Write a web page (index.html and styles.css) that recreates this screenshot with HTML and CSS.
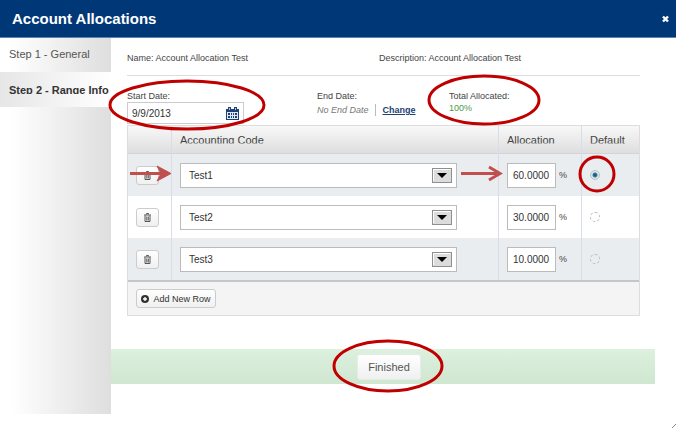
FILE: index.html
```html
<!DOCTYPE html>
<html lang="en">
<head>
    <meta charset="UTF-8">
    <meta name="viewport" content="width=device-width, initial-scale=1.0">
    <title>Account Allocations</title>
    <link rel="stylesheet" href="styles.css">
</head>
<body>
    <header class="titlebar">
        <h1>Account Allocations</h1>
        <button class="close" type="button" aria-label="Close">
            <svg width="7" height="8" viewBox="0 0 7 8"><path d="M1 1.5l5 5M6 1.5l-5 5" stroke="#fff" stroke-width="2.4"/></svg>
        </button>
    </header>

    <div class="layout">
        <nav class="steps">
            <a href="#general">Step 1 - General</a>
            <a href="#range" class="active"><span>Step 2 - Range Info</span></a>
        </nav>

        <main>
            <div class="content">
                <div class="summary">
                    <p>Name: Account Allocation Test</p>
                    <p>Description: Account Allocation Test</p>
                </div>

                <div class="dates">
                    <div class="field">
                        <label for="startDate">Start Date:</label>
                        <div class="date-box">
                            <input type="text" id="startDate" value="9/9/2013">
                            <svg width="13" height="13" viewBox="0 0 13 13">
                                <path d="M0 2h13v11H0z" fill="#1d4273"/>
                                <path d="M2 0h3v3H2zM8 0h3v3H8z" fill="#1d4273"/>
                                <path d="M3 1h1v2H3zM9 1h1v2H9z" fill="#b9c8da"/>
                                <path d="M1 5h11v7H1z" fill="#dfe8f2"/>
                                <path d="M2 6h2v2H2zM5 6h1v2H5zM7 6h1v2H7zM9 6h2v2H9zM2 9h2v2H2zM5 9h1v2H5zM7 9h1v2H7zM9 9h2v2H9z" fill="#1d4273"/>
                            </svg>
                        </div>
                    </div>
                    <div class="field">
                        <span class="label">End Date:</span>
                        <div class="end-date"><em>No End Date</em><a href="#change">Change</a></div>
                    </div>
                    <div class="field">
                        <span class="label">Total Allocated:</span>
                        <span class="total">100%</span>
                    </div>
                </div>

                <table class="grid">
                    <thead>
                        <tr>
                            <th class="col-delete"></th>
                            <th><span>Accounting Code</span></th>
                            <th class="col-allocation"><span>Allocation</span></th>
                            <th class="col-default"><span>Default</span></th>
                        </tr>
                    </thead>
                    <tbody>
                        <tr>
                            <td><button class="btn trash" type="button" aria-label="Delete row"><svg width="7" height="9" viewBox="0 0 7 9"><use href="#trash"/></svg></button></td>
                            <td>
                                <div class="select-box">
                                    <select aria-label="Accounting Code"><option>Test1</option></select>
                                    <svg width="20" height="15" viewBox="0 0 20 15"><use href="#drop"/></svg>
                                </div>
                            </td>
                            <td><div class="percent"><input type="text" value="60.0000" aria-label="Allocation"><span>%</span></div></td>
                            <td><input type="radio" name="default" aria-label="Default" checked></td>
                        </tr>
                        <tr>
                            <td><button class="btn trash" type="button" aria-label="Delete row"><svg width="7" height="9" viewBox="0 0 7 9"><use href="#trash"/></svg></button></td>
                            <td>
                                <div class="select-box">
                                    <select aria-label="Accounting Code"><option>Test2</option></select>
                                    <svg width="20" height="15" viewBox="0 0 20 15"><use href="#drop"/></svg>
                                </div>
                            </td>
                            <td><div class="percent"><input type="text" value="30.0000" aria-label="Allocation"><span>%</span></div></td>
                            <td><input type="radio" name="default" aria-label="Default"></td>
                        </tr>
                        <tr>
                            <td><button class="btn trash" type="button" aria-label="Delete row"><svg width="7" height="9" viewBox="0 0 7 9"><use href="#trash"/></svg></button></td>
                            <td>
                                <div class="select-box">
                                    <select aria-label="Accounting Code"><option>Test3</option></select>
                                    <svg width="20" height="15" viewBox="0 0 20 15"><use href="#drop"/></svg>
                                </div>
                            </td>
                            <td><div class="percent"><input type="text" value="10.0000" aria-label="Allocation"><span>%</span></div></td>
                            <td><input type="radio" name="default" aria-label="Default"></td>
                        </tr>
                    </tbody>
                    <tfoot>
                        <tr>
                            <td colspan="4">
                                <button class="btn add" type="button">
                                    <svg width="8" height="8" viewBox="0 0 8 8"><circle cx="4" cy="4" r="4" fill="#333"/><path d="M4 2v4M2 4h4" stroke="#fff" stroke-width="1.4"/></svg>
                                    Add New Row
                                </button>
                            </td>
                        </tr>
                    </tfoot>
                </table>
            </div>

            <div class="actions">
                <button class="finish" type="button">Finished</button>
            </div>
        </main>
    </div>

    <svg class="grip" width="4" height="4" viewBox="0 0 4 4"><path d="M0 4l4-4" stroke="#888"/></svg>

    <!-- Markers that point out the fields to fill in -->
    <svg class="marks" width="676" height="428" viewBox="0 0 676 428">
        <g fill="none" stroke="#c00000" stroke-width="3">
            <ellipse cx="187" cy="105" rx="77" ry="24"/>
            <ellipse cx="484" cy="100" rx="55" ry="24"/>
            <circle cx="597" cy="174" r="17"/>
            <ellipse cx="388" cy="366" rx="54" ry="25"/>
        </g>
        <g fill="none" stroke="#c0504d" stroke-width="3">
            <path d="M130 173.500h32"/>
            <path d="M157 166l14 7.500l-14 7.500l4-7.500z" fill="#c0504d" stroke-width="1"/>
            <path d="M461 173.500h38M489 167l11 6.500l-11 6.500"/>
        </g>
    </svg>

    <!-- Shared icons -->
    <svg class="defs" width="0" height="0">
        <symbol id="trash" viewBox="0 0 7 9">
            <path d="M0 2h7M2.500 1.500v-1h2v1M1 2.500v6h5v-6M2.800 3.500v4M4.300 3.500v4" fill="none" stroke="#555"/>
        </symbol>
        <symbol id="drop" viewBox="0 0 20 15">
            <rect x="0.500" y="0.500" width="19" height="14" fill="#dcdcdc" stroke="#8f8f8f"/>
            <path d="M1.500 13v-11.500h17" fill="none" stroke="#fff"/>
            <path d="M5 5h10l-5 5z" fill="#000"/>
        </symbol>
    </svg>
</body>
</html>
```
FILE: styles.css
```css
* {
    margin: 0;
    padding: 0;
    box-sizing: border-box;
}

body {
    font-family: "Liberation Sans", Arial, sans-serif;
    font-size: 9px;
    line-height: 12px;
    color: #444;
    background-color: #fff;
    position: relative;
    min-height: 100vh;
}

input, select, button {
    font-family: inherit;
    font-size: 10px;
    color: #333;
}

svg {
    display: block;
}

/* Title bar */
.titlebar {
    display: flex;
    justify-content: space-between;
    align-items: center;
    height: 38px;
    padding: 0 7px 0 12px;
    background-color: #003777;
    border-bottom: 1px solid #5c83ab;
}

.titlebar h1 {
    font-size: 15px;
    line-height: 20px;
    color: #fff;
}

.close {
    background: none;
    border: none;
    cursor: pointer;
}

.layout {
    display: flex;
    align-items: flex-start;
}

/* Steps on the left */
.steps {
    width: 111px;
    min-height: 376px;
    flex-shrink: 0;
    background: linear-gradient(to right, #fff 10%, #dedede);
}

.steps a {
    display: block;
    height: 34px;
    padding: 9px 0 0 9px;
    font-size: 11px;
    line-height: 14px;
    color: #555;
    text-decoration: none;
    white-space: nowrap;
}

.steps .active {
    height: 35px;
    padding-top: 11px;
    font-weight: bold;
    color: #333;
    background: linear-gradient(to right, #e6e6e6, #fff);
}

.steps span {
    display: block;
    clip-path: inset(0 0 3px 0);
}

main {
    flex: 1;
}

.content {
    padding: 0 36px 0 16px;
}

.summary {
    display: grid;
    grid-template-columns: 252px 1fr;
    height: 38px;
    padding-top: 14px;
    border-bottom: 1px solid #ddd;
}

.dates {
    display: grid;
    grid-template-columns: 190px 132px 1fr;
    height: 49px;
    padding-top: 14px;
}

.field label, .field .label {
    display: block;
    height: 12px;
    clip-path: inset(3px 0 0 0);
}

.date-box {
    display: flex;
    align-items: center;
    width: 117px;
    height: 22px;
    padding: 0 4px;
    border: 1px solid #ccc;
}

.date-box input {
    flex: 1;
    min-width: 0;
    border: none;
    background: none;
}

.end-date {
    display: flex;
    padding-top: 2px;
}

.end-date em {
    padding-right: 6px;
    margin-right: 7px;
    color: #777;
    border-right: 1px solid #bbb;
}

.end-date a {
    font-weight: bold;
    color: #1d4273;
}

.total {
    color: #4c9a4c;
}

/* Allocation table */
.grid {
    width: 100%;
    table-layout: fixed;
    border-collapse: separate;
    border-spacing: 0;
    border: 1px solid #ddd;
}

.grid th {
    height: 28px;
    padding: 0 8px;
    font-size: 11px;
    line-height: 14px;
    font-weight: normal;
    text-align: left;
    background: linear-gradient(#f8f8f8, #dedede);
    border-bottom: 1px solid #d4d4d4;
}

.grid th span {
    display: block;
    clip-path: inset(0 0 3px 0);
}

.grid th + th, .grid td + td {
    border-left: 1px solid #d9dcea;
}

.col-delete {
    width: 43px;
}

.col-allocation {
    width: 83px;
}

.col-default {
    width: 58px;
}

.grid td {
    height: 42px;
    padding: 0 8px;
    vertical-align: middle;
}

.grid tbody tr:nth-child(odd) {
    background-color: #e9edf0;
}

.grid tfoot td {
    height: 35px;
    background-color: #f4f4f4;
    border-top: 2px solid #c3c7c9;
}

.btn {
    display: flex;
    align-items: center;
    justify-content: center;
    height: 19px;
    background: linear-gradient(#fff, #f0f0f0);
    border: 1px solid #ccc;
    border-radius: 3px;
    cursor: pointer;
}

.trash {
    width: 23px;
}

.add {
    width: 80px;
    gap: 4px;
    font-size: 9px;
    white-space: nowrap;
}

.select-box {
    position: relative;
    width: 277px;
}

.select-box select {
    display: block;
    width: 100%;
    height: 25px;
    padding: 0 8px;
    appearance: none;
    background-color: #fff;
    border: 1px solid #bbb;
}

.select-box svg {
    position: absolute;
    top: 5px;
    right: 5px;
    pointer-events: none;
}

.percent {
    display: flex;
    align-items: center;
    gap: 3px;
}

.percent input {
    width: 49px;
    height: 25px;
    padding: 0 5px;
    background-color: #fff;
    border: 1px solid #bbb;
}

.grid input[type="radio"] {
    display: block;
    width: 10px;
    height: 10px;
    appearance: none;
    border: 1px dashed #bbb;
    border-radius: 50%;
}

.grid input[type="radio"]:checked {
    border: 1px solid #b5c4cc;
    background: radial-gradient(#17405a 0, #3a7f9e 2px, #dbe6ea 3px);
}

/* Bottom bar */
.actions {
    display: flex;
    justify-content: center;
    align-items: center;
    height: 35px;
    margin: 33px 21px 0 0;
    padding-left: 12px;
    background: linear-gradient(#ddf1de, #cfe6d0);
}

.finish {
    width: 64px;
    height: 26px;
    font-size: 11px;
    color: #555;
    background: linear-gradient(#fff, #f0f0f0);
    border: 1px solid #e6ece6;
    border-radius: 3px;
    cursor: pointer;
}

.grip {
    position: absolute;
    right: 0;
    bottom: 0;
}

.marks {
    position: absolute;
    top: 0;
    left: 0;
    pointer-events: none;
}

.defs {
    position: absolute;
}
```
